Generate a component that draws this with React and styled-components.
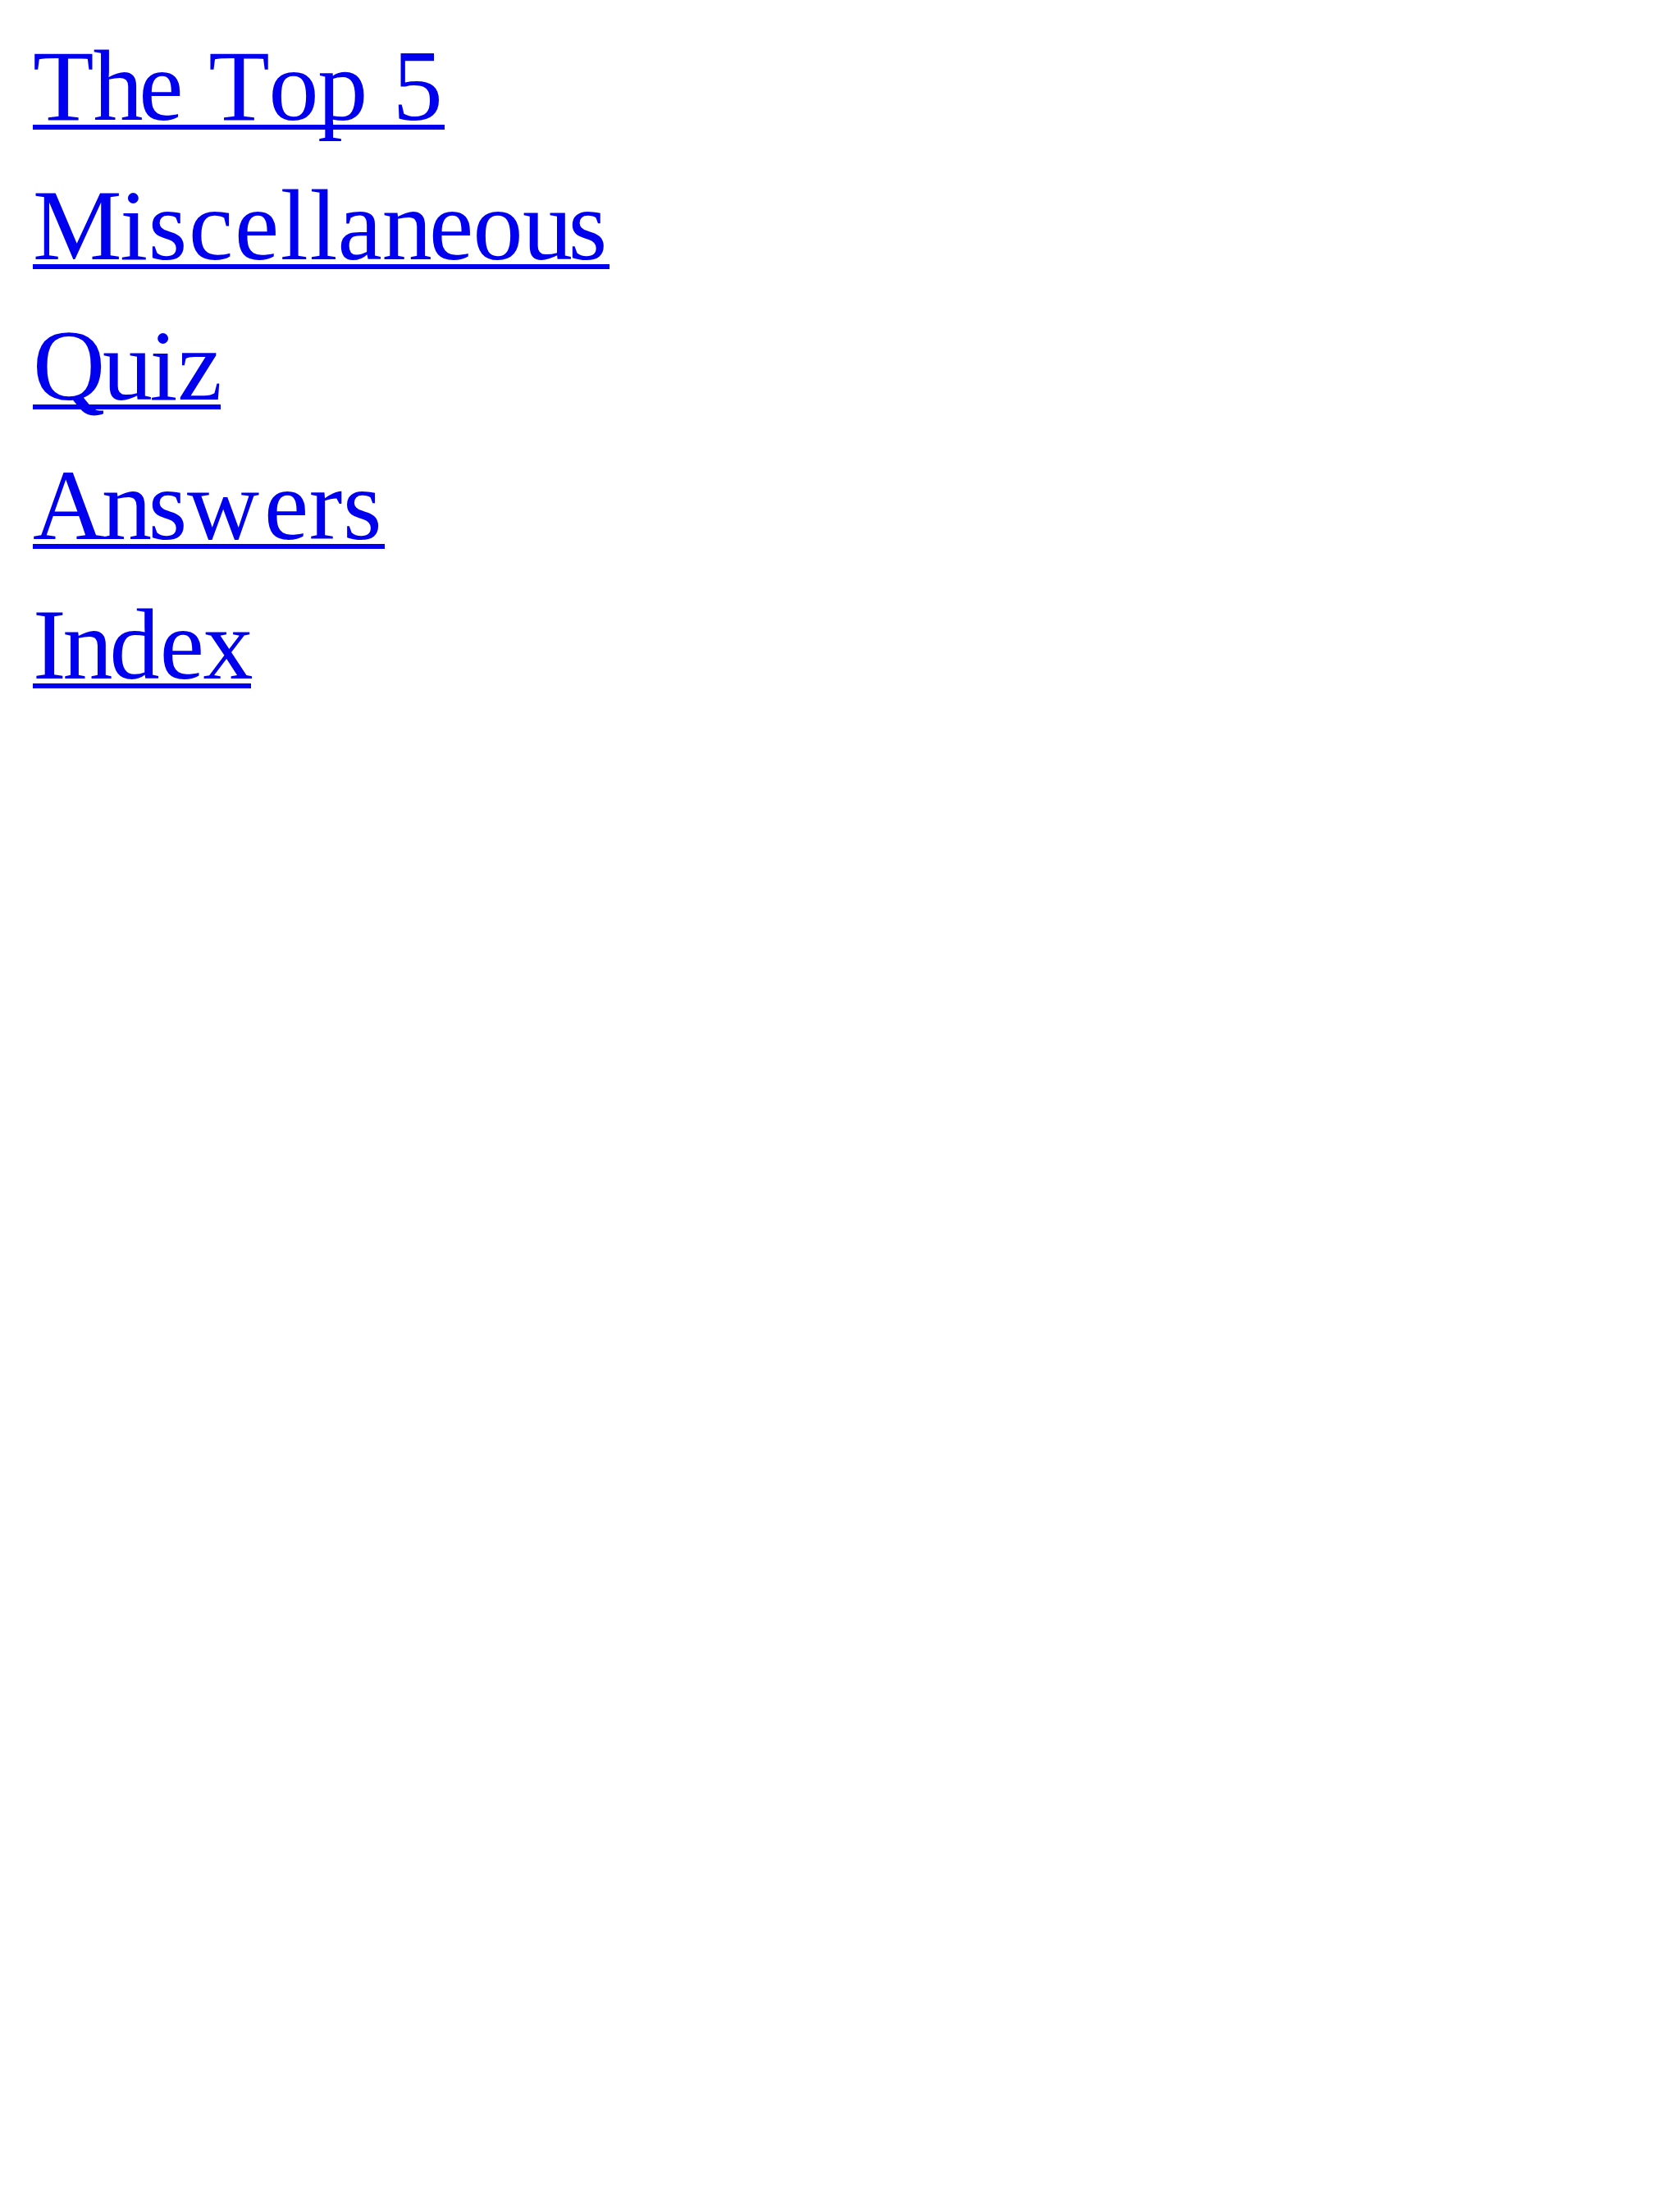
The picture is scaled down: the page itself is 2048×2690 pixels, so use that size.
import React from "react"
import styled, { createGlobalStyle } from "styled-components"

// Every label is a list of runs: [text, tracking in px]
const links = [
  [["T", -1], ["h", -5.4], ["e ", 0.2], ["To", -1.2], ["p ", 0], ["5", 2.4]],
  [["M", -2.3], ["i", 0.7], ["scel", 1.75], ["la", 0.1], ["n", -3.8], ["eo", -0.6], ["u", -5.1], ["s", 3.1]],
  [["Q", -3], ["u", -3.5], ["i", 0], ["z", -1.6]],
  [["An", -4.2], ["s", -0.3], ["w", 5.9], ["er", 0.6], ["s", 4]],
  [["I", -4.1], ["n", -4], ["d", 0.1], ["e", -1.2], ["x", -3]],
]

const App = () => (
  <>
    <GlobalStyle />
    <LinkList>
      {links.map((runs, i) => (
        <PageLink key={i} href="#">
          {runs.map(([text, tracking], j) => (
            <Run key={j} $tracking={tracking}>{text}</Run>
          ))}
        </PageLink>
      ))}
    </LinkList>
  </>
)

const GlobalStyle = createGlobalStyle`
  body {
    margin: 0;
    background: #ffffff;
  }
`

const LinkList = styled.nav`
  display: flex;
  flex-direction: column;
  align-items: flex-start;
  padding: 20px 40px;
`

/* the underline is a background, so it stays unbroken across the runs */
const PageLink = styled.a`
  color: #0000ee;
  font-family: "Liberation Serif", "Times New Roman", serif;
  font-size: 122px;
  line-height: 170.25px;
  font-kerning: none;
  white-space: pre;
  text-decoration: none;
  background: linear-gradient(#0000ee, #0000ee) 0 132px / 100% 6px no-repeat;
`

const Run = styled.span`
  letter-spacing: ${props => props.$tracking}px;
`

export default App
